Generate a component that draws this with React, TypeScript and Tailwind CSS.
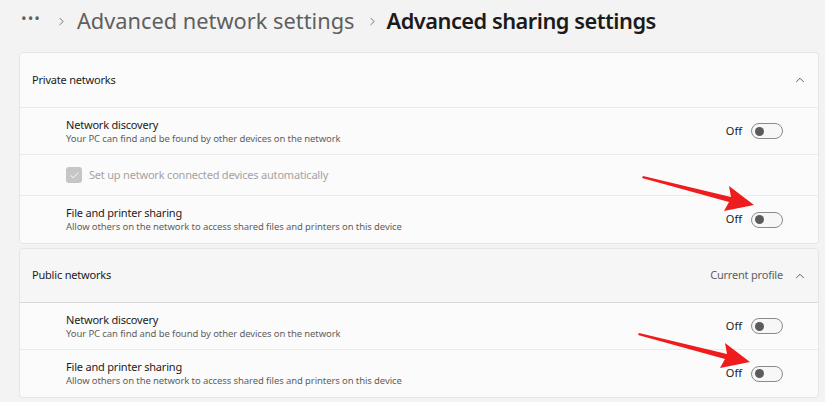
import { ChevronRight, ChevronUp, Check } from 'lucide-react'

const font = { fontFamily: '"Noto Sans", "Open Sans", sans-serif' }

function Toggle() {
  return (
    <div className="flex items-center gap-[9px]">
      <span className="text-[11px] text-[#1b1b1b]">Off</span>
      <div className="w-[32px] h-[16px] rounded-full border border-[#8b8b8b] bg-[#f7f7f7] flex items-center pl-[3px]">
        <div className="w-[9px] h-[9px] rounded-full bg-[#5b5b5b]"></div>
      </div>
    </div>
  )
}

function SettingRow({ title, subtitle, h, last }: { title: string; subtitle: string; h: string; last?: boolean }) {
  return (
    <div className={`flex items-center justify-between pl-[46px] pr-[35px] ${h} ${last ? '' : 'border-b border-[#ebebeb]'}`}>
      <div className="flex flex-col leading-none">
        <span className="text-[11px] tracking-[-0.2px] text-[#1b1b1b]">{title}</span>
        <span className="text-[9.5px] tracking-[-0.1px] text-[#5f5f5f] mt-[4px]">{subtitle}</span>
      </div>
      <Toggle />
    </div>
  )
}

function Arrow({ className }: { className: string }) {
  return (
    <svg className={`absolute ${className}`} width="120" height="42" viewBox="0 0 120 42">
      <path d="M2 3 L90 24 L88 13 L113 32 L83 38 L88 29 L1 5 Z" fill="#ee1c1c" />
    </svg>
  )
}

export default function App() {
  return (
    <div className="relative w-[825px] h-[402px] overflow-hidden bg-[#f3f3f3] pl-[19px] pr-[6px]" style={font}>
      <div className="flex items-center h-[42px] pl-[2px]">
        <span className="text-[15px] text-[#5f5f5f] tracking-[1px] leading-none -mt-[6px]">•••</span>
        <ChevronRight size={13} strokeWidth={1.6} className="text-[#5f5f5f] ml-[14px]" />
        <span className="text-[21.8px] text-[#5f5f5f] ml-[9px] leading-none">Advanced network settings</span>
        <ChevronRight size={13} strokeWidth={1.6} className="text-[#5f5f5f] ml-[11px]" />
        <span className="text-[21.8px] text-[#1b1b1b] font-semibold tracking-[-0.5px] ml-[8px] leading-none">Advanced sharing settings</span>
      </div>

      <div className="mt-[10px] rounded-[4px] border border-[#e5e5e5] bg-[#fbfbfb]">
        <div className="flex items-center justify-between h-[55px] pl-[12px] pr-[11px] border-b border-[#ebebeb]">
          <span className="text-[11px] tracking-[-0.2px] text-[#1b1b1b]">Private networks</span>
          <ChevronUp size={14} strokeWidth={1.4} className="text-[#3b3b3b]" />
        </div>
        <SettingRow title="Network discovery" subtitle="Your PC can find and be found by other devices on the network" h="h-[47px]" />
        <div className="flex items-center h-[41px] pl-[46px] border-b border-[#ebebeb]">
          <div className="w-[16px] h-[16px] rounded-[3px] bg-[#c6c6c6] flex items-center justify-center">
            <Check size={11} strokeWidth={2} className="text-white" />
          </div>
          <span className="text-[11px] tracking-[-0.2px] text-[#a3a3a3] ml-[7px]">Set up network connected devices automatically</span>
        </div>
        <SettingRow title="File and printer sharing" subtitle="Allow others on the network to access shared files and printers on this device" h="h-[47px]" last />
      </div>

      <div className="mt-[4px] rounded-[4px] border border-[#e5e5e5] bg-[#fbfbfb] overflow-hidden">
        <div className="flex items-center justify-between h-[54px] pl-[12px] pr-[11px] bg-[#f6f6f6] border-b border-[#d9d9d9]">
          <span className="text-[11px] tracking-[-0.2px] text-[#1b1b1b]">Public networks</span>
          <div className="flex items-center gap-[10px]">
            <span className="text-[11px] tracking-[-0.2px] text-[#5f5f5f]">Current profile</span>
            <ChevronUp size={14} strokeWidth={1.4} className="text-[#3b3b3b]" />
          </div>
        </div>
        <SettingRow title="Network discovery" subtitle="Your PC can find and be found by other devices on the network" h="h-[47px]" />
        <SettingRow title="File and printer sharing" subtitle="Allow others on the network to access shared files and printers on this device" h="h-[47px]" last />
      </div>

      <Arrow className="left-[641px] top-[173px]" />
      <Arrow className="left-[637px] top-[330px]" />
    </div>
  )
}
